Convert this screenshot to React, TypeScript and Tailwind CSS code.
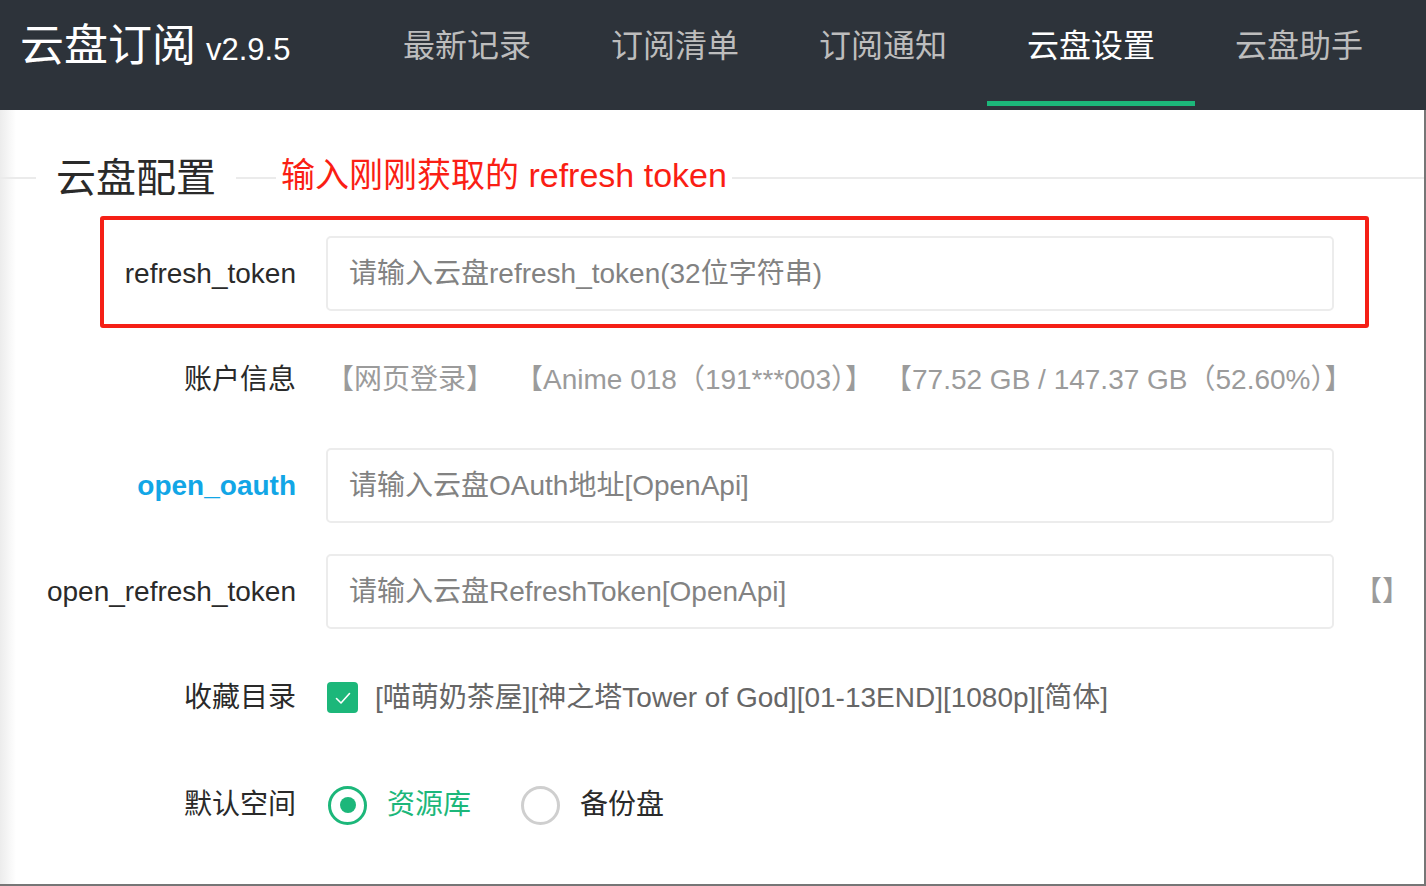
import React from 'react';

const tabs = ['最新记录', '订阅清单', '订阅通知', '云盘设置', '云盘助手'];

const Label: React.FC<{ children: React.ReactNode; blue?: boolean }> = ({ children, blue }) => (
  <div
    className={
      'w-[296px] shrink-0 text-right text-[28px] whitespace-nowrap ' +
      (blue ? 'text-[#12a6e6] font-bold' : 'text-[#2a2a2a]')
    }
  >
    {children}
  </div>
);

const TextInput: React.FC<{ placeholder: string }> = ({ placeholder }) => (
  <input
    className="ml-[30px] w-[1008px] h-[75px] border-2 border-[#ececec] rounded-[5px] px-[21px] text-[28px] text-[#333] placeholder:text-[#828282] outline-none bg-white"
    placeholder={placeholder}
  />
);

export default function App() {
  return (
    <div className="w-[1426px] h-[886px] overflow-hidden bg-white font-['Liberation_Sans','Noto_Sans_CJK_SC',sans-serif]">
      <header className="h-[110px] bg-[#2d333a] flex items-start">
        <div className="w-[363px] h-[92px] flex items-center pl-[20px]">
          <span className="text-[44px] text-white leading-none">云盘订阅</span>
          <span className="ml-[10px] mt-[6px] text-[31px] text-white leading-none">v2.9.5</span>
        </div>
        {tabs.map((t) => (
          <div
            key={t}
            className={
              'w-[208px] h-[106px] pb-[9px] flex items-center justify-center text-[32px] border-b-[5px] ' +
              (t === '云盘设置' ? 'text-white border-[#1cb77a]' : 'text-[#bdbdbd] border-transparent')
            }
          >
            {t}
          </div>
        ))}
      </header>

      <main className="h-[776px] border-r-2 border-b-2 border-[#767676] bg-[linear-gradient(to_right,#ececec,#ffffff_16px)]">
        <div className="pt-[44px] h-[92px] flex items-center">
          <div className="w-[36px] h-[2px] bg-[#ebebeb]" />
          <div className="px-[20px] text-[40px] text-[#2a2a2a] leading-none">云盘配置</div>
          <div className="w-[40px] h-[2px] bg-[#ebebeb]" />
          <div className="px-[5px] mb-[6px] text-[34px] text-[#fa1e14] leading-none">输入刚刚获取的 refresh token</div>
          <div className="flex-1 h-[2px] bg-[#ebebeb]" />
        </div>

        <div className="mt-[34px] flex flex-col gap-[31px]">
          <div className="relative h-[75px] flex items-center">
            <Label>refresh_token</Label>
            <TextInput placeholder="请输入云盘refresh_token(32位字符串)" />
            <div className="absolute left-[100px] top-[-20px] w-[1269px] h-[112px] border-4 border-[#f52016] rounded-[3px] pointer-events-none" />
          </div>

          <div className="h-[75px] flex items-center">
            <Label>账户信息</Label>
            <div className="ml-[30px] flex items-center text-[28px] text-[#9b9b9b] whitespace-nowrap">
              <span>【网页登录】</span>
              <span className="ml-[21px]">【Anime 018（191***003）】</span>
              <span className="ml-[11px]">【77.52 GB / 147.37 GB（52.60%）】</span>
            </div>
          </div>

          <div className="h-[75px] flex items-center">
            <Label blue>open_oauth</Label>
            <TextInput placeholder="请输入云盘OAuth地址[OpenApi]" />
          </div>

          <div className="h-[75px] flex items-center">
            <Label>open_refresh_token</Label>
            <TextInput placeholder="请输入云盘RefreshToken[OpenApi]" />
            <span className="ml-[20px] text-[28px] text-[#9b9b9b]">【】</span>
          </div>

          <div className="h-[75px] flex items-center">
            <Label>收藏目录</Label>
            <div className="ml-[31px] w-[31px] h-[31px] rounded-[4px] bg-[#1cb77a] flex items-center justify-center">
              <svg width="20" height="20" viewBox="0 0 20 20" fill="none">
                <path d="M3.5 10.5 L8 15 L16.5 5.5" stroke="white" strokeWidth="1.6" strokeLinecap="round" strokeLinejoin="round" />
              </svg>
            </div>
            <span className="ml-[17px] text-[28px] text-[#666]">[喵萌奶茶屋][神之塔Tower of God][01-13END][1080p][简体]</span>
          </div>

          <div className="h-[75px] pt-[3px] flex items-center">
            <Label>默认空间</Label>
            <div className="ml-[32px] w-[39px] h-[39px] rounded-full border-[3px] border-[#1cb77a] flex items-center justify-center">
              <div className="w-[16px] h-[16px] rounded-full bg-[#1cb77a]" />
            </div>
            <span className="ml-[20px] text-[28px] text-[#1cb77a]">资源库</span>
            <div className="ml-[50px] w-[39px] h-[39px] rounded-full border-[3px] border-[#cfcfcf]" />
            <span className="ml-[20px] text-[28px] text-[#2a2a2a]">备份盘</span>
          </div>
        </div>
      </main>
    </div>
  );
}
